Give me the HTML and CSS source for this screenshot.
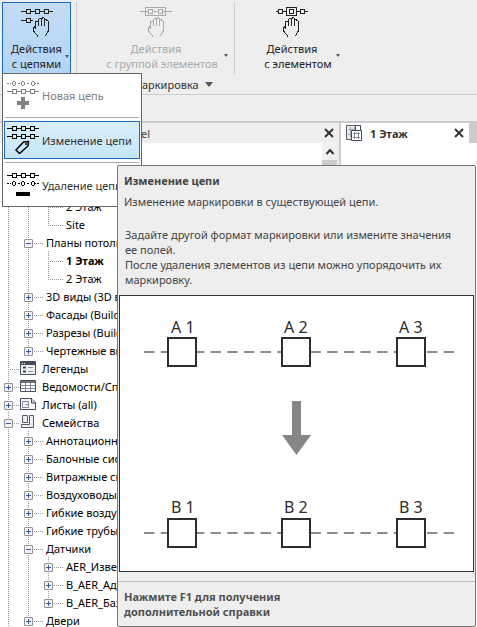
FILE: index.html
```html
<!DOCTYPE html>
<html lang="ru">
<head>
<meta charset="utf-8">
<title>Маркировка</title>
<link rel="stylesheet" href="styles.css">
</head>
<body>
<svg class="defs" aria-hidden="true">
  <symbol id="hand" viewBox="0 0 16 20">
    <path d="M4.5 19.5V18.5L1.5 15.5L.5 13.5V10.5L2.500 9.500V4.500H4.500M2.500 9.500V11.500M5.500 9V2.500L6.500 1.500H7.500L8.500 2.500V9M8.500 2.500L9.500 .5H10.500L11.500 2V9M11.500 2.500H13.500L14.500 4.500M14.500 4.500H15.500V13.500L14.500 15.500L12.500 18.500H11.500" fill="none" stroke="currentColor"/>
  </symbol>
  <symbol id="chain" viewBox="0 0 32 5">
    <path d="M0 2.5H5M10 2.500H14M19 2.500H23M28 2.500H32M5.500.5h4v4h-4zM14.500.5h4v4h-4zM23.500.5h4v4h-4z" fill="none" stroke="currentColor"/>
  </symbol>
  <symbol id="loose" viewBox="0 0 32 5">
    <path d="M0 2.500H2M3 2.500H4M11 2.500H13M20 2.500H22M28 2.500H29M30 2.500H32M5.500 1.500l1-1h1l1 1v2l-1 1h-1l-1-1zM14.500 1.500l1-1h1l1 1v2l-1 1h-1l-1-1zM24.500 1.500l1-1h1l1 1v2l-1 1h-1l-1-1z" fill="none" stroke="currentColor"/>
  </symbol>
</svg>

<header class="ribbon">
  <div class="groups">
    <div class="group first">
      <button class="tool open" aria-expanded="true">
        <svg class="tool-icon" viewBox="0 0 32 32"><use href="#chain" x="0" y="4" width="32" height="5"/><path d="M0 15.500H5M5.500 13.500h4v4h-4zM10 15.500H12" fill="none" stroke="currentColor"/><use href="#hand" x="12" y="12" width="16" height="20"/></svg>
        <span class="lines"><span class="top">Действия</span><span>с цепями</span></span><i class="arrow"></i>
      </button>
      <div class="menu" role="menu">
        <button class="item off" role="menuitem" disabled>
          <svg class="item-icon" viewBox="0 0 32 28"><use href="#loose" width="32" height="5"/><use href="#chain" y="8" width="32" height="5"/><path d="M14 16h4v4h4v4h-4v4h-4v-4h-4v-4h4z" fill="currentColor"/></svg>
          Новая цепь</button>
        <hr>
        <button class="item current" role="menuitem">
          <svg class="item-icon" viewBox="0 0 32 28"><use href="#chain" width="32" height="5"/><use href="#chain" y="8" width="32" height="5"/><path class="smooth" d="M9 24L16.500 16L21.500 15.500L21 20L12.500 27.500Z" fill="none" stroke="currentColor" stroke-width="1.500"/><circle cx="19" cy="18" r="1" fill="currentColor"/></svg>
          Изменение цепи</button>
        <hr>
        <button class="item" role="menuitem">
          <svg class="item-icon" viewBox="0 0 32 28"><use href="#chain" y="2" width="32" height="5"/><use href="#loose" y="10" width="32" height="5"/><path d="M9 21h14v4h-14z" fill="currentColor"/></svg>
          Удаление цепи</button>
      </div>
    </div>
    <div class="group second">
      <button class="tool" disabled>
        <svg class="tool-icon" viewBox="0 0 32 32"><path d="M0 6.500H8M13 6.500H18M23 6.500H32M5.500 2.500h20v8h-20zM8.500 4.500h4v4h-4zM18.500 4.500h4v4h-4z" fill="none" stroke="currentColor"/><use href="#hand" x="8" y="12" width="16" height="20"/></svg>
        <span class="lines"><span class="top">Действия</span><span>с группой элементов</span></span><i class="arrow"></i>
      </button>
    </div>
    <div class="group third">
      <button class="tool">
        <svg class="tool-icon" viewBox="0 0 32 32"><path d="M0 6.500H2M7 6.500H10M21 6.500H24M29 6.500H32M2.500 4.500h4v4h-4zM24.500 4.500h4v4h-4zM10.500 2.500h10v8h-10zM13.500 4.500h4v4h-4z" fill="none" stroke="currentColor"/><use href="#hand" x="7" y="12" width="16" height="20"/></svg>
        <span class="lines"><span class="top">Действия</span><span>с элементом</span></span><i class="arrow"></i>
      </button>
    </div>
  </div>
  <div class="caption">Маркировка<i class="arrow big"></i></div>
</header>
<div class="options"></div>

<main class="workspace">
  <section class="browser">
    <div class="panel-head"><span>el</span>
      <button class="close" aria-label="Закрыть"><svg viewBox="0 0 10 10"><path d="M1 1L9 9M9 1L1 9"/></svg></button>
    </div>
    <div class="panel-body">
      <ul class="tree">
        <li><ul>
          <li><ul>
            <li><div class="row leaf">2 Этаж</div></li>
            <li><div class="row leaf">Site</div></li>
          </ul></li>
          <li><div class="row"><button class="box minus" aria-label="Свернуть"></button>Планы потолков</div>
            <ul>
              <li><div class="row leaf"><b>1 Этаж</b></div></li>
              <li><div class="row leaf">2 Этаж</div></li>
            </ul></li>
          <li><div class="row"><button class="box" aria-label="Развернуть"></button>3D виды (3D вид)</div></li>
          <li><div class="row"><button class="box" aria-label="Развернуть"></button>Фасады (Building)</div></li>
          <li><div class="row"><button class="box" aria-label="Развернуть"></button>Разрезы (Building)</div></li>
          <li><div class="row"><button class="box" aria-label="Развернуть"></button>Чертежные виды</div></li>
        </ul></li>
        <li><div class="row leaf root"><svg viewBox="0 0 16 16"><path d="M.5 1.500h15v13h-15z" fill="#eef1f5" stroke="#454b58"/><path d="M1 2h14v3H1z" fill="#454b58"/><path d="M2 3.500h1M4 3.500h1" stroke="#fff"/><path d="M3 7.500h3M3 11.500h3" stroke="#454b58" stroke-width="2"/><path d="M8 7.500h5M8 11.500h5" stroke="#8c929c"/></svg>Легенды</div></li>
        <li><div class="row root"><button class="box" aria-label="Развернуть"></button><svg viewBox="0 0 16 16"><path d="M.5 2.500h15v11h-15z" fill="#fff" stroke="#454b58"/><path d="M1 3h14v2H1z" fill="#6b717d"/><path d="M1 7.500h14M1 10.500h14M5.500 5v8M10.500 5v8" stroke="#858b96"/></svg>Ведомости/Спецификации</div></li>
        <li><div class="row root"><button class="box" aria-label="Развернуть"></button><svg viewBox="0 0 16 16"><path d="M.5 2.500h11l4 4v7h-15z" fill="#f7f8fa" stroke="#454b58"/><path d="M2.500 5.500h6v6h-6zM5.500 8.500h3v3" fill="none" stroke="#858b96"/><path d="M11.500 2v5h4" fill="#ccd1da" stroke="#454b58"/></svg>Листы (all)</div></li>
        <li><div class="row root"><button class="box minus" aria-label="Свернуть"></button><svg viewBox="0 0 16 16"><path d="M2.500 1.500h5v7h-5zM9.500 1.500h4v12h-12v-3h8z" fill="#eef0f4" stroke="#565b66"/></svg>Семейства</div>
          <ul>
            <li><div class="row"><button class="box" aria-label="Развернуть"></button>Аннотационные</div></li>
            <li><div class="row"><button class="box" aria-label="Развернуть"></button>Балочные системы</div></li>
            <li><div class="row"><button class="box" aria-label="Развернуть"></button>Витражные системы</div></li>
            <li><div class="row"><button class="box" aria-label="Развернуть"></button>Воздуховоды</div></li>
            <li><div class="row"><button class="box" aria-label="Развернуть"></button>Гибкие воздуховоды</div></li>
            <li><div class="row"><button class="box" aria-label="Развернуть"></button>Гибкие трубы</div></li>
            <li><div class="row"><button class="box minus" aria-label="Свернуть"></button>Датчики</div>
              <ul>
                <li><div class="row"><button class="box" aria-label="Развернуть"></button>AER_Извещатель</div></li>
                <li><div class="row"><button class="box" aria-label="Развернуть"></button>B_AER_Адресный</div></li>
                <li><div class="row"><button class="box" aria-label="Развернуть"></button>B_AER_База</div></li>
              </ul></li>
            <li><div class="row"><button class="box" aria-label="Развернуть"></button>Двери</div></li>
          </ul></li>
      </ul>
      <div class="scroll"><button aria-label="Вверх"><svg viewBox="0 0 10 7"><path d="M1.500 6L5 2L8.500 6"/></svg></button></div>
    </div>
  </section>
  <section class="view">
    <div class="tabs">
      <div class="tab">
        <svg viewBox="0 0 16 16"><path d="M.5 .5h14v14h-14z" fill="#e7eaf0" stroke="#565b66"/><path d="M4.500 2v10M2 4.500h8M8.500 2v4M2 9.500h3" stroke="#a1a6b0"/><path d="M9.500 .5h5v5h-5z" fill="#fff" stroke="#454b58"/><path d="M5.500 5.500h10v10h-10z" fill="#fff" stroke="#454b58"/><path d="M8.500 7v7M12.500 7v7M7 8.500h7M7 12.500h7" stroke="#858b96"/></svg>
        <b>1 Этаж</b>
        <button class="close" aria-label="Закрыть"><svg viewBox="0 0 10 10"><path d="M1 1L9 9M9 1L1 9"/></svg></button>
      </div>
    </div>
  </section>
</main>

<aside class="tip" role="tooltip">
  <div class="tip-text">
    <h2>Изменение цепи</h2>
    <p>Изменение маркировки в существующей цепи.</p>
    <p class="more">Задайте другой формат маркировки или измените значения<br>ее полей.<br>После удаления элементов из цепи можно упорядочить их<br>маркировку.</p>
  </div>
  <svg class="diagram" viewBox="0 0 353 275">
    <g stroke="#8c8c8c" stroke-width="2" stroke-dasharray="10.400 6.250">
      <path d="M24 56H334M24 237H334"/>
    </g>
    <g fill="#fff" stroke="#2d2d2d" stroke-width="2">
      <path d="M48 42h28v28h-28zM162 42h28v28h-28zM277 42h28v28h-28zM48 223h28v28h-28zM162 223h28v28h-28zM277 223h28v28h-28z"/>
    </g>
    <path d="M172 105h9v34h10l-14.500 20l-14.500-20h10z" fill="#868686"/>
    <g class="labels">
      <text x="51" y="37">A 1</text><text x="164" y="37">A 2</text><text x="279" y="37">A 3</text>
      <text x="51" y="217">B 1</text><text x="164" y="217">B 2</text><text x="279" y="217">B 3</text>
    </g>
  </svg>
  <p class="help">Нажмите F1 для получения<br>дополнительной справки</p>
</aside>
</body>
</html>
```
FILE: styles.css
```css
* { box-sizing: border-box; }

body {
  margin: 0;
  min-height: 100vh;
  display: flex;
  flex-direction: column;
  position: relative;
  overflow: hidden;
  background: #fff;
  color: #333;
  font: 11px/15px "Noto Sans", "Open Sans", sans-serif;
}

button {
  margin: 0;
  padding: 0;
  border: 0;
  background: none;
  color: inherit;
  font: inherit;
}

ul { list-style: none; margin: 0; padding: 0; }
h2, p { margin: 0; font-size: 11px; }
svg { display: block; flex: none; }
use, .tool-icon path, .item-icon path { shape-rendering: crispEdges; }
.item-icon .smooth { shape-rendering: auto; }
.defs { position: absolute; width: 0; height: 0; }

/* Ribbon */
.ribbon { background: #eee; border-bottom: 1px solid #ccc; height: 95px; flex: none; }
.groups { display: flex; padding: 2px 2px 0; }
.group { position: relative; height: 72px; }
.first { width: 75px; border-right: 1px solid #ccc; }
.second { width: 158px; border-right: 1px solid #ccc; padding-left: 2px; }
.third { padding-left: 4px; }

.tool {
  position: relative;
  height: 72px;
  padding: 3px 0 0 16px;
  display: flex;
  flex-direction: column;
  align-items: center;
  gap: 4px;
  white-space: nowrap;
  color: #222;
}
.tool:disabled { color: #aaa; }
.second .tool { width: 150px; }
.third .tool { width: 102px; }
.tool-icon { width: 32px; height: 32px; margin-right: 12px; }
.lines { display: flex; flex-direction: column; align-items: center; }
.top { margin-right: 12px; }
.open {
  width: 69px;
  padding: 2px 0 0;
  border: 1px solid #1b6ac0;
  background: linear-gradient(#c3dcf5, #b3d5f5);
}
.open .tool-icon, .open .top { margin-right: 0; }

.arrow {
  position: absolute;
  right: 1px;
  top: 52px;
  border: 2px solid transparent;
  border-top: 3px solid #555;
  border-bottom: 0;
}
.caption { display: flex; align-items: center; gap: 6px; padding: 3px 0 0 132px; color: #333; }
.arrow.big { position: static; border-width: 5px 4px 0; }

.options { height: 28px; flex: none; background: #eee; border-bottom: 2px solid #ccc; }

/* Drop-down menu */
.menu {
  position: absolute;
  z-index: 2;
  left: 0;
  top: 71px;
  width: 140px;
  padding: 2px 1px;
  border: 1px solid #666;
  background: #fff;
}
.menu hr { margin: 3px 1px; border: 0; height: 1px; background: #aaa; }
.item {
  display: flex;
  align-items: center;
  gap: 3px;
  width: 100%;
  height: 38px;
  padding: 0 2px;
  border: 1px solid transparent;
  white-space: nowrap;
  overflow: hidden;
}
.off { color: #808080; }
.current { border-color: #1b6ac0; background: linear-gradient(#d9eefa, #c5e6f8); }
.item-icon { width: 32px; height: 28px; color: #000; }
.off .item-icon { color: #808080; }

/* Panels */
.workspace { display: flex; flex: 1; background: #ccc; }
.browser { display: flex; flex-direction: column; width: 339px; background: #eee; }
.panel-head { display: flex; align-items: center; height: 20px; padding: 0 5px 0 141px; color: #444; }
.close { margin-left: auto; padding: 0; }
.close svg { width: 10px; height: 10px; }
.close path, .scroll path { fill: none; stroke: #333; stroke-width: 2; }
.panel-body { display: flex; flex: 1; padding-right: 2px; }
.scroll { width: 15px; background: #ccc; }
.scroll button { display: grid; place-items: center; width: 15px; height: 17px; background: #f0f0f0; }
.scroll svg { width: 10px; height: 7px; }
.view { flex: 1; margin-left: 2px; background: #fff; }
.tabs { display: flex; height: 20px; padding-right: 8px; background: #ccc; }
.tab { display: flex; flex: 1; align-items: center; gap: 8px; padding: 0 5px; background: #fff; }
.tab > svg { width: 16px; height: 16px; }

/* Project tree */
.tree { flex: 1; padding-top: 54px; background: #fff; color: #000; height: 484px; overflow: hidden; }
.tree li { position: relative; }
.tree li::before {
  content: "";
  position: absolute;
  left: 8px;
  top: 0;
  bottom: 0;
  width: 1px;
  background: repeating-linear-gradient(#999 0 1px, transparent 1px 2px);
}
.tree ul li:last-child::before { bottom: auto; height: 10px; }
.tree > li:last-child > ul > li:last-child::before { height: 18px; }
.tree ul { padding-left: 20px; }
.row {
  position: relative;
  display: flex;
  align-items: center;
  height: 18px;
  padding-left: 26px;
  white-space: nowrap;
}
.row::before {
  content: "";
  position: absolute;
  left: 8px;
  top: 10px;
  width: 15px;
  height: 1px;
  background: repeating-linear-gradient(90deg, #999 0 1px, transparent 1px 2px);
}
.root { padding-left: 20px; gap: 6px; }
.root::before { width: 11px; }
.root svg { width: 16px; height: 16px; }
.box {
  position: absolute;
  left: 4px;
  top: 6px;
  width: 9px;
  height: 9px;
  border: 1px solid #919191;
  border-radius: 1px;
  background:
    linear-gradient(#3c5a9c, #3c5a9c) center / 5px 1px no-repeat,
    linear-gradient(#3c5a9c, #3c5a9c) center / 1px 5px no-repeat,
    #f3f3f3;
}
.minus { background: linear-gradient(#3c5a9c, #3c5a9c) center / 5px 1px no-repeat, #f3f3f3; }

/* Tooltip */
.tip {
  position: absolute;
  z-index: 3;
  left: 117px;
  right: 1px;
  top: 165px;
  border: 1px solid #767676;
  border-radius: 2px;
  background: #eee;
  color: #444;
}
.tip-text { padding: 7px 6px 8px; }
.tip-text h2 { margin-bottom: 6px; }
.tip-text .more { margin-top: 18px; padding-left: 1px; }
.diagram { margin: 0 1px; width: calc(100% - 2px); border: 1px solid #333; background: #fff; }
.labels { font-size: 16px; fill: #2d2d2d; }
.help { margin-top: 9px; padding: 7px 6px; border-top: 1px solid #bbb; font-weight: bold; color: #505050; }
```
